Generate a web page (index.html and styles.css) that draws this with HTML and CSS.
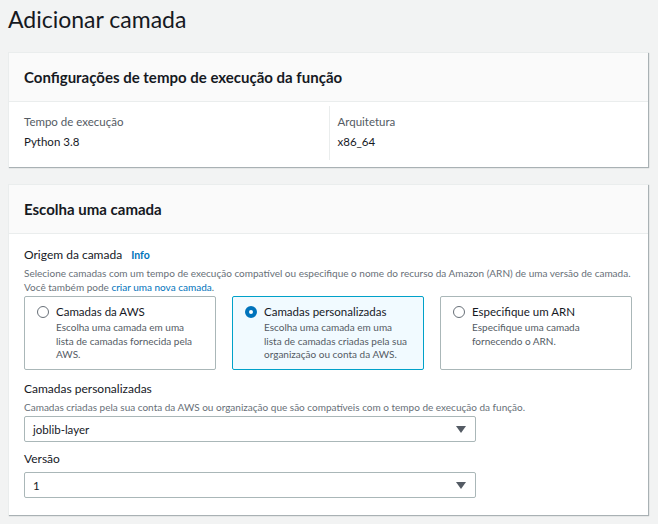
FILE: index.html
```html
<!DOCTYPE html>
<html lang="pt-BR">
<head>
<meta charset="utf-8">
<link rel="stylesheet" href="styles.css">
</head>
<body>
<div class="page">
  <h1 class="title">Adicionar camada</h1>

  <section class="card">
    <header class="card-head"><h2>Configurações de tempo de execução da função</h2></header>
    <div class="card-body cols">
      <div class="col">
        <div class="kv-label">Tempo de execução</div>
        <div class="kv-value">Python 3.8</div>
      </div>
      <div class="col col-right">
        <div class="kv-label">Arquitetura</div>
        <div class="kv-value">x86_64</div>
      </div>
    </div>
  </section>

  <section class="card">
    <header class="card-head"><h2>Escolha uma camada</h2></header>
    <div class="card-body body2">
      <div class="field-label">Origem da camada <a class="info">Info</a></div>
      <div class="desc">Selecione camadas com um tempo de execução compatível ou especifique o nome do recurso da Amazon (ARN) de uma versão de camada.<br>Você também pode <a class="link">criar uma nova camada</a>.</div>
      <div class="tiles">
        <div class="tile">
          <span class="radio"></span>
          <div class="tile-text">
            <div class="tile-title">Camadas da AWS</div>
            <div class="tile-desc">Escolha uma camada em uma<br>lista de camadas fornecida pela<br>AWS.</div>
          </div>
        </div>
        <div class="tile tile-on">
          <span class="radio radio-on"></span>
          <div class="tile-text">
            <div class="tile-title">Camadas personalizadas</div>
            <div class="tile-desc">Escolha uma camada em uma<br>lista de camadas criadas pela sua<br>organização ou conta da AWS.</div>
          </div>
        </div>
        <div class="tile">
          <span class="radio"></span>
          <div class="tile-text">
            <div class="tile-title">Especifique um ARN</div>
            <div class="tile-desc">Especifique uma camada<br>fornecendo o ARN.</div>
          </div>
        </div>
      </div>

      <div class="field-label f2">Camadas personalizadas</div>
      <div class="desc">Camadas criadas pela sua conta da AWS ou organização que são compatíveis com o tempo de execução da função.</div>
      <div class="select"><span>joblib-layer</span><span class="caret"></span></div>

      <div class="field-label f3">Versão</div>
      <div class="select"><span>1</span><span class="caret"></span></div>
    </div>
  </section>
</div>
</body>
</html>
```

FILE: styles.css
```css
* { box-sizing: border-box; }
html, body { margin: 0; padding: 0; }
body {
  background: #f2f3f3;
  font-family: Lato, "Noto Sans", sans-serif;
  color: #16191f;
  font-size: 12px;
}
.page { padding: 0 10px 10px 8px; }
.title {
  margin: 0;
  font-size: 23px;
  font-weight: 400;
  line-height: 38px;
  height: 52px;
}
.card {
  background: #fff;
  border-top: 1px solid #eaeded;
  border-left: 1px solid #eaeded;
  box-shadow: 1px 1px 1px 0 rgba(0,28,36,0.3);
  margin-bottom: 17px;
}
.card-head {
  background: #fafafa;
  border-bottom: 1px solid #eaeded;
  height: 49px;
  display: flex;
  align-items: center;
  padding: 0 15px;
}
.card-head h2 {
  margin: 0;
  font-size: 15px;
  font-weight: 700;
}
.cols {
  display: grid;
  grid-template-columns: 1fr 1fr;
  padding: 4px 15px 7px;
}
.col { padding: 6px 0 8px; }
.col-right { border-left: 1px solid #eaeded; padding-left: 8px; }
.kv-label { color: #545b64; font-size: 11.5px; line-height: 20px; }
.kv-value { font-size: 11.5px; line-height: 20px; }
.body2 { padding: 10px 16px 17px 15px; }
.field-label { font-size: 12px; line-height: 22px; }
.info {
  color: #0073bb;
  font-weight: 700;
  font-size: 10.5px;
  margin-left: 6px;
}
.desc { font-size: 10px; color: #687078; line-height: 14px; white-space: nowrap; }
.link { color: #0073bb; }
.tiles {
  display: grid;
  grid-template-columns: repeat(3, 1fr);
  gap: 16px;
  margin-top: 2px;
}
.tile {
  border: 1px solid #aab7b8;
  border-radius: 2px;
  height: 74px;
  padding: 6px 10px 6px 12px;
  display: flex;
  gap: 7px;
}
.tile-on { background: #f1faff; border-color: #00a1c9; }
.radio {
  flex: none;
  width: 12px;
  height: 12px;
  border-radius: 50%;
  border: 1px solid #687078;
  margin-top: 3px;
  background: #fff;
}
.radio-on { border: 4px solid #0073bb; }
.tile-title { font-size: 11.5px; line-height: 18px; }
.tile-desc { font-size: 10px; line-height: 13.5px; color: #545b64; white-space: nowrap; }
.f2 { margin-top: 8px; }
.f3 { margin-top: 6px; }
.select {
  width: 452px;
  height: 26px;
  border: 1px solid #aab7b8;
  border-radius: 2px;
  display: flex;
  align-items: center;
  justify-content: space-between;
  padding: 0 9px 0 8px;
  font-size: 11.5px;
  margin-top: 2px;
}
.caret {
  width: 0;
  height: 0;
  border-left: 5px solid transparent;
  border-right: 5px solid transparent;
  border-top: 7px solid #545b64;
}
```
